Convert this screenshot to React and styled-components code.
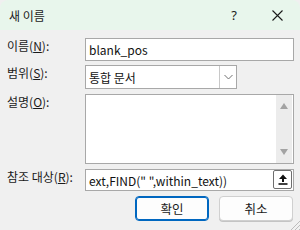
import React from "react";
import styled, { createGlobalStyle } from "styled-components";

const Global = createGlobalStyle`
  html, body { margin: 0; padding: 0; background: #f0f0f0; }
  body { font-family: "Noto Sans", "Noto Sans CJK KR", sans-serif; }
`;

const Window = styled.div`
  width: 300px;
  height: 230px;
  background: #f0f0f0;
  border-radius: 8px 8px 0 0;
  overflow: hidden;
  position: relative;
  display: flex;
  flex-direction: column;
  font-family: "Noto Sans", "Noto Sans CJK KR", sans-serif;
  font-size: 12px;
  color: #1a1a1a;
`;

const TitleBar = styled.div`
  height: 30px;
  flex: none;
  background: #e8f6ec;
  display: flex;
  align-items: center;
  padding-left: 9px;
`;

const Title = styled.div`
  flex: 1;
  font-size: 12px;
  font-family: "Noto Sans CJK KR", sans-serif;
  color: #1a1a1a;
`;

const CaptionButton = styled.div`
  width: ${(p) => p.$w}px;
  height: 30px;
  display: flex;
  align-items: center;
  justify-content: center;
  font-size: 13px;
  color: #1a1a1a;
`;

const Content = styled.div`
  display: flex;
  flex-direction: column;
  padding: 8px 6px 0 7px;
`;

const Row = styled.div`
  display: flex;
  align-items: flex-start;
  margin-top: ${(p) => p.$mt || 0}px;
`;

const Label = styled.div`
  width: 78px;
  flex: none;
  line-height: 16px;
  font-family: "Noto Sans CJK KR", sans-serif;
  font-size: 12px;
  color: #1a1a1a;
  white-space: nowrap;
  u { text-decoration: underline; text-underline-offset: 1px; }
`;

const Field = styled.div`
  box-sizing: border-box;
  width: ${(p) => p.$w || 209}px;
  height: ${(p) => p.$h}px;
  background: #fff;
  border: 1px solid ${(p) => p.$border || "#a8a8a8"};
  display: flex;
  align-items: center;
  position: relative;
  font-family: "Noto Sans", "Noto Sans CJK KR", sans-serif;
  font-size: 12px;
  color: #111;
`;

const FieldText = styled.span`
  flex: 1;
  padding-left: 3px;
  white-space: nowrap;
  overflow: hidden;
  font-family: "Noto Sans CJK KR", sans-serif;
`;

const DropButton = styled.div`
  width: 16px;
  height: 100%;
  border-left: 1px solid #c8c8c8;
  display: flex;
  align-items: center;
  justify-content: center;
  background: #fff;
`;

const ScrollTrack = styled.div`
  position: absolute;
  top: 0;
  right: 1px;
  bottom: 0;
  width: 16px;
  background: #ececec;
  display: flex;
  flex-direction: column;
  justify-content: space-between;
  align-items: center;
  padding: 8px 0;
  box-sizing: border-box;
`;

const RefButton = styled.div`
  position: absolute;
  right: 1px;
  top: 0px;
  width: 19px;
  height: 19px;
  box-sizing: border-box;
  border: 1px solid #6e6e6e;
  border-radius: 2px;
  background: #fff;
  display: flex;
  align-items: center;
  justify-content: center;
`;

const Buttons = styled.div`
  display: flex;
  justify-content: flex-end;
  gap: 10px;
  margin-top: 5px;
  padding-right: 1px;
`;

const Button = styled.div`
  box-sizing: border-box;
  width: 74px;
  height: 25px;
  border-radius: 4px;
  border: ${(p) => (p.$primary ? "1px solid #0067c0" : "1px solid #d0d0d0")};
  box-shadow: ${(p) => (p.$primary ? "inset 0 0 0 1px #0067c0" : "0 1px 0 #c4c4c4")};
  background: #fdfdfd;
  display: flex;
  align-items: center;
  justify-content: center;
  font-family: "Noto Sans CJK KR", sans-serif;
  font-size: 12.5px;
  color: #1a1a1a;
`;

const Grip = styled.svg`
  position: absolute;
  right: 0;
  bottom: 0;
`;

export default function App() {
  return (
    <>
      <Global />
      <Window>
        <TitleBar>
          <Title>새 이름</Title>
          <CaptionButton $w={40}>?</CaptionButton>
          <CaptionButton $w={46}>
            <svg width="11" height="11" viewBox="0 0 11 11">
              <path d="M0.5 0.5 L10.5 10.5 M10.5 0.5 L0.5 10.5" stroke="#1a1a1a" strokeWidth="1.1" />
            </svg>
          </CaptionButton>
        </TitleBar>
        <Content>
          <Row>
            <Label>
              이름(<u>N</u>):
            </Label>
            <Field $h={23}>
              <FieldText>blank_pos</FieldText>
            </Field>
          </Row>
          <Row $mt={4}>
            <Label>
              범위(<u>S</u>):
            </Label>
            <Field $h={24} $w={152}>
              <FieldText>통합 문서</FieldText>
              <DropButton>
                <svg width="9" height="6" viewBox="0 0 9 6">
                  <path d="M0.5 1 L4.5 5 L8.5 1" stroke="#707070" strokeWidth="1" fill="none" />
                </svg>
              </DropButton>
            </Field>
          </Row>
          <Row $mt={5}>
            <Label>
              설명(<u>O</u>):
            </Label>
            <Field $h={70}>
              <ScrollTrack>
                <svg width="8" height="6" viewBox="0 0 8 6">
                  <path d="M4 0 L8 6 L0 6 Z" fill="#a3a3a3" />
                </svg>
                <svg width="8" height="6" viewBox="0 0 8 6">
                  <path d="M0 0 L8 0 L4 6 Z" fill="#a3a3a3" />
                </svg>
              </ScrollTrack>
            </Field>
          </Row>
          <Row $mt={5}>
            <Label>
              참조 대상(<u>R</u>):
            </Label>
            <Field $h={22}>
              <FieldText>ext,FIND(" ",within_text))</FieldText>
              <RefButton>
                <svg width="10" height="11" viewBox="0 0 10 11">
                  <path d="M5 0.5 L9 5 L6 5 L6 8 L4 8 L4 5 L1 5 Z" fill="#111" />
                  <rect x="0.5" y="9.2" width="9" height="1.6" fill="#111" />
                </svg>
              </RefButton>
            </Field>
          </Row>
          <Buttons>
            <Button $primary>확인</Button>
            <Button>취소</Button>
          </Buttons>
        </Content>
        <Grip width="11" height="11" viewBox="0 0 11 11">
          <path d="M11 2 L2 11 M11 6 L6 11 M11 10 L10 11" stroke="#bdbdbd" strokeWidth="1" />
        </Grip>
      </Window>
    </>
  );
}
